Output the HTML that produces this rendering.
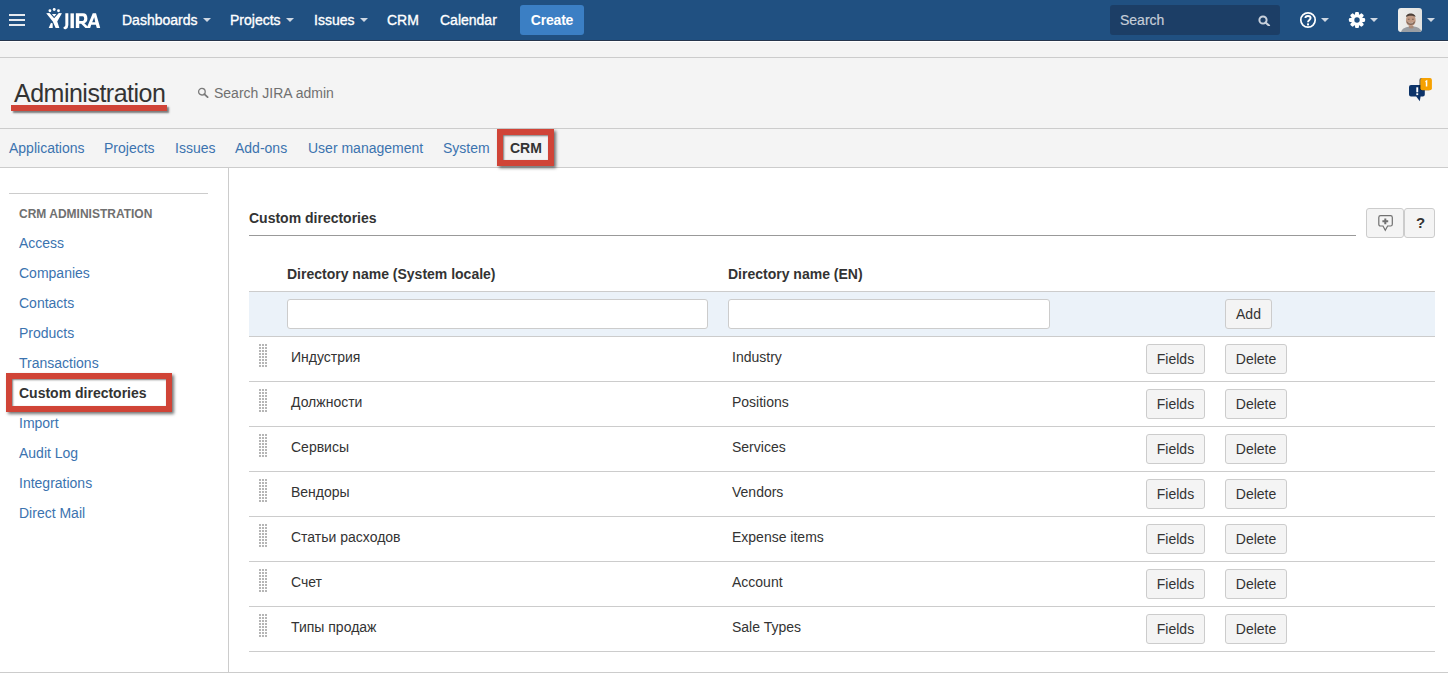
<!DOCTYPE html>
<html><head><meta charset="utf-8">
<style>
*{box-sizing:border-box;margin:0;padding:0}
html,body{width:1448px;height:673px;overflow:hidden;background:#fff;font-family:"Liberation Sans",sans-serif;font-size:14px;color:#333}
.abs{position:absolute}
#hdr{position:absolute;left:0;top:0;width:1448px;height:41px;background:#205081;border-bottom:1px solid #26364d}
.nav{position:absolute;top:0;color:#fff;font-size:14px;line-height:40px;white-space:nowrap;-webkit-text-stroke:0.35px #fff}
.caret{position:absolute;width:0;height:0;border-left:4px solid transparent;border-right:4px solid transparent;border-top:4px solid #cfd8e3}
#band{position:absolute;left:0;top:41px;width:1448px;height:127px;background:#f4f4f4;border-top:1px solid #fff}
.hline{position:absolute;left:0;width:1448px;height:1px;background:#cccccc}
.tab{position:absolute;top:129px;line-height:38px;color:#3b73af;font-size:14px;white-space:nowrap}
.side{position:absolute;left:19px;color:#3b73af;font-size:14px;line-height:16px;white-space:nowrap}
.cell{position:absolute;font-size:14px;line-height:16px;white-space:nowrap;color:#333}
.btn{position:absolute;height:30px;background:#f4f4f4;border:1px solid #ccc;border-radius:3px;color:#333;font-size:14px;line-height:28px;text-align:center}
.redbox{position:absolute;border:6px solid #d04437;box-shadow:2px 2px 3px rgba(0,0,0,.55), inset 1px 1px 2px rgba(0,0,0,.5)}
.rowline{position:absolute;left:249px;width:1186px;height:1px;background:#ccc}
.grip{position:absolute;left:259px;width:9px;height:24px;background-image:radial-gradient(circle at 1px 1px,#b4b4b4 0.7px,transparent 1px);background-size:3px 3px}
</style></head><body>
<div id="hdr">
  <!-- hamburger -->
  <div class="abs" style="left:9px;top:14px;width:16px;height:2px;background:#e6eaf0"></div>
  <div class="abs" style="left:9px;top:19px;width:16px;height:2px;background:#e6eaf0"></div>
  <div class="abs" style="left:9px;top:24px;width:16px;height:2px;background:#e6eaf0"></div>
  <!-- logo -->
  <svg class="abs" style="left:42px;top:5px" width="62" height="28" viewBox="0 0 1448 654">
    <g fill="#fff">
      <circle cx="185" cy="135" r="33"/><circle cx="285" cy="105" r="33"/><circle cx="385" cy="135" r="33"/>
      <path d="M98,194 L174,184 L284,312 L394,184 L466,194 L356,385 L405,537 L318,537 L252,385 Z"/>
      <path d="M232,210 L336,210 L284,276 Z"/>
      <path d="M210,414 L250,432 L250,537 L156,537 Z"/>
      <path d="M545,195 H615 V470 Q615,545 555,565 Q510,570 500,535 Q500,510 530,505 Q545,495 545,470 Z"/>
      <rect x="665" y="195" width="80" height="345"/>
      <path fill-rule="evenodd" d="M790,195 H960 Q1060,195 1060,315 Q1060,400 990,428 L1100,540 H1015 L915,440 H870 V540 H790 Z M870,265 H950 Q985,265 985,318 Q985,372 950,372 H870 Z"/>
      <path fill-rule="evenodd" d="M1185,195 H1262 L1360,540 H1280 L1258,460 H1150 L1125,540 H1045 Z M1220,285 L1172,400 H1244 Z"/>
    </g>
  </svg>
  <div class="nav" style="left:122px">Dashboards</div><div class="caret" style="left:203px;top:18px"></div>
  <div class="nav" style="left:230px">Projects</div><div class="caret" style="left:286px;top:18px"></div>
  <div class="nav" style="left:314px">Issues</div><div class="caret" style="left:360px;top:18px"></div>
  <div class="nav" style="left:387px">CRM</div>
  <div class="nav" style="left:440px">Calendar</div>
  <div class="abs" style="left:520px;top:5px;width:64px;height:30px;background:#3b7fc4;border-radius:3px;color:#fff;text-align:center;line-height:30px;font-weight:bold;letter-spacing:-0.2px">Create</div>
  <!-- search -->
  <div class="abs" style="left:1110px;top:5px;width:170px;height:30px;background:#1c3e66;border-radius:3px"></div>
  <div class="nav" style="left:1120px;color:#c5cdd8;-webkit-text-stroke:0.2px #c5cdd8">Search</div>
  <svg class="abs" style="left:1258px;top:15px" width="13" height="11" viewBox="0 0 13 11"><circle cx="5" cy="5" r="3.6" fill="none" stroke="#c9d1dc" stroke-width="2"/><path d="M7.5 7.5 L11 10.5" stroke="#c9d1dc" stroke-width="2.2" stroke-linecap="round"/></svg>
  <!-- help -->
  <svg class="abs" style="left:1299px;top:11px" width="18" height="18" viewBox="0 0 18 18"><circle cx="9" cy="9" r="7.2" fill="none" stroke="#fff" stroke-width="1.7"/><path d="M6.4 7.1 C6.4 4.3 11.6 4.3 11.6 7.1 C11.6 8.9 9 9.1 9 11.2" fill="none" stroke="#fff" stroke-width="1.9"/><rect x="8" y="12.4" width="2" height="2" fill="#fff"/></svg>
  <div class="caret" style="left:1321px;top:18px"></div>
  <!-- gear -->
  <svg class="abs" style="left:1348px;top:11px" width="18" height="18" viewBox="0 0 18 18"><g fill="#fff"><circle cx="9" cy="9" r="5.9"/>
    <rect x="7.05" y="0.9" width="3.9" height="16.2" rx="1.1"/><rect x="7.05" y="0.9" width="3.9" height="16.2" rx="1.1" transform="rotate(45 9 9)"/><rect x="7.05" y="0.9" width="3.9" height="16.2" rx="1.1" transform="rotate(90 9 9)"/><rect x="7.05" y="0.9" width="3.9" height="16.2" rx="1.1" transform="rotate(135 9 9)"/></g>
    <circle cx="9" cy="9" r="2.7" fill="#205081"/></svg>
  <div class="caret" style="left:1370px;top:18px"></div>
  <!-- avatar -->
  <svg class="abs" style="left:1398px;top:8px" width="24" height="24" viewBox="0 0 24 24">
    <defs><clipPath id="av"><rect width="24" height="24" rx="3"/></clipPath>
    <linearGradient id="avbg" x1="0" x2="1"><stop offset="0" stop-color="#efefed"/><stop offset="1" stop-color="#e2e2e0"/></linearGradient></defs>
    <g clip-path="url(#av)">
      <rect width="24" height="24" fill="url(#avbg)"/>
      <path d="M3 24 C4 20.5 7.5 19.2 10.5 18.8 L16 18.6 C19.5 19 22.5 20.5 24 24 Z" fill="#9a9ea3"/>
      <ellipse cx="13.2" cy="19" rx="2.6" ry="1.6" fill="#a88a78"/>
      <ellipse cx="12.8" cy="12.2" rx="4.8" ry="6.2" fill="#c09a84"/>
      <path d="M8.2 12.5 C8.6 18.6 17 18.6 17.4 12.5 C16.2 15.6 9.4 15.6 8.2 12.5 Z" fill="#6a5448" opacity="0.7"/>
      <path d="M8 9.2 C7.6 4.2 17.6 4.2 17.5 9.2 C16.4 7.2 9.2 7.2 8 9.2 Z" fill="#4d4038"/>
      <rect x="9.8" y="10.8" width="1.8" height="0.8" fill="#5a463a" opacity="0.8"/><rect x="14" y="10.8" width="1.8" height="0.8" fill="#5a463a" opacity="0.8"/>
      <path d="M10.5 14.6 Q12.8 15.8 15.1 14.6" stroke="#f0e6e0" stroke-width="0.7" fill="none" opacity="0.7"/>
    </g>
  </svg>
  <div class="caret" style="left:1427px;top:18px"></div>
</div>

<div id="band"></div>
<div class="hline" style="top:57px"></div>
<div class="hline" style="top:128px"></div>
<div class="hline" style="top:167px"></div>

<!-- admin header -->
<div class="abs" style="left:14px;top:79px;font-size:25px;line-height:28px;letter-spacing:-0.5px;color:#333;white-space:nowrap">Administration</div>
<div class="abs" style="left:11px;top:105px;width:156px;height:6px;background:#d04437;box-shadow:2px 2px 2px rgba(0,0,0,.5)"></div>
<svg class="abs" style="left:197px;top:87px" width="12" height="11" viewBox="0 0 12 11"><circle cx="4.9" cy="4.7" r="3.3" fill="none" stroke="#7a7a7a" stroke-width="1.3"/><path d="M7.3 7.1 L10.6 10.2" stroke="#7a7a7a" stroke-width="1.8" stroke-linecap="round"/></svg>
<div class="abs" style="left:214px;top:85px;font-size:14px;line-height:16px;color:#707070;white-space:nowrap">Search JIRA admin</div>
<!-- notification icon -->
<svg class="abs" style="left:1406px;top:76px" width="28" height="28" viewBox="0 0 28 28">
  <path d="M5 9 H16.8 Q18.8 9 18.8 11 V18.6 Q18.8 20.6 16.8 20.6 H14.6 L13.8 25.2 L10.2 20.6 H5 Q3 20.6 3 18.6 V11 Q3 9 5 9Z" fill="#0c3369"/>
  <rect x="10.3" y="11.3" width="1.9" height="5" fill="#fff"/><rect x="10.3" y="17.3" width="1.9" height="1.8" fill="#fff"/>
  <rect x="14.4" y="1.9" width="11.5" height="12.3" rx="2" fill="#f6a100" style="filter:drop-shadow(-0.5px 0.5px 0.6px rgba(0,0,0,.6))"/>
  <path d="M19.3 5 L21.3 3.8 V10.4 H19.8 V5.9 L19.3 6.2Z" fill="#fff"/>
</svg>
<!-- tabs -->
<div class="tab" style="left:9px">Applications</div>
<div class="tab" style="left:104px">Projects</div>
<div class="tab" style="left:175px">Issues</div>
<div class="tab" style="left:235px">Add-ons</div>
<div class="tab" style="left:308px">User management</div>
<div class="tab" style="left:443px">System</div>
<div class="tab" style="left:510px;color:#333;font-weight:bold">CRM</div>
<div class="redbox" style="left:497px;top:129px;width:57px;height:37px"></div>

<!-- sidebar -->
<div class="abs" style="left:228px;top:168px;width:1px;height:505px;background:#ccc"></div>
<div class="abs" style="left:9px;top:193px;width:199px;height:1px;background:#ccc"></div>
<div class="side" style="top:206px;color:#707070;font-weight:bold;font-size:12px">CRM ADMINISTRATION</div>
<div class="side" style="top:235px">Access</div>
<div class="side" style="top:265px">Companies</div>
<div class="side" style="top:295px">Contacts</div>
<div class="side" style="top:325px">Products</div>
<div class="side" style="top:355px">Transactions</div>
<div class="side" style="top:385px;color:#333;font-weight:bold">Custom directories</div>
<div class="side" style="top:415px">Import</div>
<div class="side" style="top:445px">Audit Log</div>
<div class="side" style="top:475px">Integrations</div>
<div class="side" style="top:505px">Direct Mail</div>
<div class="redbox" style="left:6px;top:373px;width:166px;height:39px"></div>

<!-- content -->
<div class="cell" style="left:249px;top:210px;font-weight:bold">Custom directories</div>
<div class="abs" style="left:249px;top:235px;width:1107px;height:1px;background:#999"></div>
<div class="btn" style="left:1366px;top:208px;width:38px"></div>
<svg class="abs" style="left:1377px;top:214px" width="17" height="18" viewBox="0 0 17 18"><path d="M3.6 1.6 H13.5 Q15.3 1.6 15.3 3.4 V10.2 Q15.3 12 13.5 12 H10.6 L8.3 16.2 L6 12 H3.6 Q1.8 12 1.8 10.2 V3.4 Q1.8 1.6 3.6 1.6Z" fill="none" stroke="#707070" stroke-width="1.2"/><path d="M8.3 4.4 V10.2 M5.4 7.3 H11.2" stroke="#707070" stroke-width="2"/></svg>
<div class="btn" style="left:1404px;top:208px;width:31px;font-weight:bold;font-size:15px;padding-left:2px">?</div>

<div class="cell" style="left:287px;top:266px;font-weight:bold">Directory name (System locale)</div>
<div class="cell" style="left:728px;top:266px;font-weight:bold">Directory name (EN)</div>

<div class="abs" style="left:249px;top:291px;width:1186px;height:46px;background:#ebf2f9;border-top:1px solid #ccc;border-bottom:1px solid #ccc"></div>
<div class="abs" style="left:287px;top:299px;width:421px;height:30px;background:#fff;border:1px solid #ccc;border-radius:3px"></div>
<div class="abs" style="left:728px;top:299px;width:322px;height:30px;background:#fff;border:1px solid #ccc;border-radius:3px"></div>
<div class="btn" style="left:1225px;top:299px;width:47px">Add</div>

<div class="grip" style="top:344px"></div>
<div class="cell" style="left:291px;top:349px">Индустрия</div>
<div class="cell" style="left:732px;top:349px">Industry</div>
<div class="btn" style="left:1146px;top:344px;width:59px">Fields</div>
<div class="btn" style="left:1225px;top:344px;width:62px">Delete</div>
<div class="rowline" style="top:381px"></div>
<div class="grip" style="top:389px"></div>
<div class="cell" style="left:291px;top:394px">Должности</div>
<div class="cell" style="left:732px;top:394px">Positions</div>
<div class="btn" style="left:1146px;top:389px;width:59px">Fields</div>
<div class="btn" style="left:1225px;top:389px;width:62px">Delete</div>
<div class="rowline" style="top:426px"></div>
<div class="grip" style="top:434px"></div>
<div class="cell" style="left:291px;top:439px">Сервисы</div>
<div class="cell" style="left:732px;top:439px">Services</div>
<div class="btn" style="left:1146px;top:434px;width:59px">Fields</div>
<div class="btn" style="left:1225px;top:434px;width:62px">Delete</div>
<div class="rowline" style="top:471px"></div>
<div class="grip" style="top:479px"></div>
<div class="cell" style="left:291px;top:484px">Вендоры</div>
<div class="cell" style="left:732px;top:484px">Vendors</div>
<div class="btn" style="left:1146px;top:479px;width:59px">Fields</div>
<div class="btn" style="left:1225px;top:479px;width:62px">Delete</div>
<div class="rowline" style="top:516px"></div>
<div class="grip" style="top:524px"></div>
<div class="cell" style="left:291px;top:529px">Статьи расходов</div>
<div class="cell" style="left:732px;top:529px">Expense items</div>
<div class="btn" style="left:1146px;top:524px;width:59px">Fields</div>
<div class="btn" style="left:1225px;top:524px;width:62px">Delete</div>
<div class="rowline" style="top:561px"></div>
<div class="grip" style="top:569px"></div>
<div class="cell" style="left:291px;top:574px">Счет</div>
<div class="cell" style="left:732px;top:574px">Account</div>
<div class="btn" style="left:1146px;top:569px;width:59px">Fields</div>
<div class="btn" style="left:1225px;top:569px;width:62px">Delete</div>
<div class="rowline" style="top:606px"></div>
<div class="grip" style="top:614px"></div>
<div class="cell" style="left:291px;top:619px">Типы продаж</div>
<div class="cell" style="left:732px;top:619px">Sale Types</div>
<div class="btn" style="left:1146px;top:614px;width:59px">Fields</div>
<div class="btn" style="left:1225px;top:614px;width:62px">Delete</div>
<div class="rowline" style="top:651px"></div>

<div class="abs" style="left:0;top:672px;width:1448px;height:1px;background:#ccc"></div>
</body></html>
